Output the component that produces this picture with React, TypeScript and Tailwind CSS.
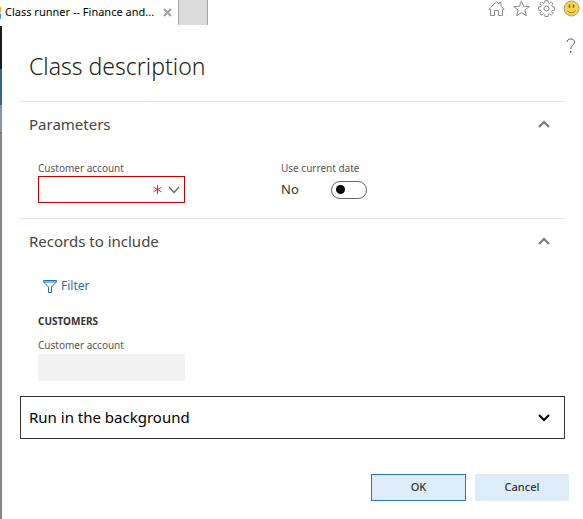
import { useState, type ReactNode } from "react";

function Chevron({ up = false, className = "" }: { up?: boolean; className?: string }) {
  return (
    <svg viewBox="0 0 12 8" className={`h-2 w-3 shrink-0 ${className}`} fill="none" stroke="currentColor" strokeWidth="2" aria-hidden="true">
      <path d={up ? "M1 7 6 2l5 5" : "M1 1l5 5 5-5"} />
    </svg>
  );
}

function BrowserBar() {
  return (
    <header className="flex h-[25px] justify-between">
      <div className="flex">
        <div className="flex items-center">
          <svg viewBox="0 0 1 12" className="mr-1 h-3 w-px" preserveAspectRatio="none" aria-hidden="true">
            <rect width="1" height="5" fill="#f5a623" />
            <rect y="5" width="1" height="2" fill="#cfe6f7" />
            <rect y="7" width="1" height="5" fill="#3b94d9" />
          </svg>
          <span className="w-[154px] whitespace-nowrap text-[11px] text-black">Class runner -- Finance and...</span>
          <button type="button" aria-label="Close tab" className="ml-1 mr-[6px] text-[#a0a0a0]">
            <svg viewBox="0 0 9 9" className="size-[9px]" stroke="currentColor" strokeWidth="2">
              <path d="M1 1l7 7M8 1 1 8" />
            </svg>
          </button>
        </div>
        <button type="button" aria-label="New tab" className="w-[30px] border-x border-[#a5a5a5] bg-[#dbdbdb]" />
      </div>
      <div className="flex items-start gap-2 pr-[3px] text-[#8c8c8c]">
        <button type="button" aria-label="Home">
          <svg viewBox="0 0 17 17" className="size-[17px]" fill="none" stroke="currentColor">
            <path d="M2.5 9.5H.8L8.5 1.5l2.5 2.6V2.5h2v3.7l3.2 3.3h-1.7v6h-4v-5h-4v5h-4v-6z" strokeLinejoin="round" />
          </svg>
        </button>
        <button type="button" aria-label="Favorites">
          <svg viewBox="0 0 17 17" className="size-[17px]" fill="none" stroke="currentColor">
            <path d="M8.5.8l2.1 5.5 5.7.2-4.5 3.7 1.6 5.6-4.9-3.2-4.9 3.2 1.6-5.6L.7 6.5l5.7-.2z" strokeLinejoin="round" />
          </svg>
        </button>
        <button type="button" aria-label="Tools">
          <svg viewBox="0 0 17 17" className="size-[17px]" fill="none" stroke="currentColor">
            <path d="M7 .7h3l.3 2.1 1.3.6 1.8-1.3 1.6 1.6-1.3 1.8.6 1.3 2.1.3v3l-2.1.3-.6 1.3 1.3 1.8-1.6 1.6-1.8-1.3-1.3.6-.3 2.1H7l-.3-2.1-1.3-.6-1.8 1.3L2 13.5l1.3-1.8-.6-1.3L.6 10V7l2.1-.3.6-1.3L2 3.6 3.6 2l1.8 1.3 1.3-.6z" strokeLinejoin="round" />
            <circle cx="8.5" cy="8.5" r="2.5" />
          </svg>
        </button>
        <button type="button" aria-label="Send a smile">
          <svg viewBox="0 0 17 17" className="size-[17px]" fill="none">
            <circle cx="8.5" cy="8.5" r="7.5" fill="#fbd34c" stroke="#a39a80" />
            <path d="M6.5 4.5v3.3M10.5 4.5v3.3" stroke="#7a6322" strokeWidth="1.5" />
            <path d="M4.5 10.5c2 3 6 3 8 0" stroke="#8a6d20" />
          </svg>
        </button>
      </div>
    </header>
  );
}

function Section({ title, children }: { title: string; children: ReactNode }) {
  const [open, setOpen] = useState(true);
  return (
    <section className="border-t border-[#e6e6e6]">
      <h2>
        <button
          type="button"
          aria-expanded={open}
          onClick={() => setOpen(!open)}
          className="flex h-11 w-full items-center justify-between pl-[9px] pr-[15px] text-[15px] text-[#444]"
        >
          {title}
          <Chevron up={open} className="text-[#777]" />
        </button>
      </h2>
      {open && children}
    </section>
  );
}

export default function App() {
  const [current, setCurrent] = useState(false);
  return (
    <div className="flex min-h-screen flex-col bg-white font-['Noto_Sans','Open_Sans',sans-serif]">
      <BrowserBar />
      <div className="flex grow pt-px">
        <div className="flex w-0.5 shrink-0 flex-col bg-[#858585]" aria-hidden="true">
          <div className="h-[43px] bg-[#1c1c1c]" />
          <div className="h-9 bg-[#37648b]" />
          <div className="h-7 border-b border-[#707070] bg-[#8496a6]" />
        </div>
        <main className="min-w-0 grow pl-[18px] pr-[14px]">
          <div className="flex h-[75px] justify-between">
            <h1 className="pl-[9px] pt-[22px] text-[23px] leading-9 font-light text-[#222]">Class description</h1>
            <button type="button" aria-label="Help" className="-mr-2 h-[38px] w-3 text-[#555]">
              <svg viewBox="0 0 10 15" className="mx-auto h-[15px] w-[10px]" fill="none" stroke="currentColor">
                <path d="M1 4C1 .2 8.5-.3 8.5 4 8.5 7 4.7 7 4.7 11" />
                <path d="M4.7 13v1.5" strokeWidth="1.4" />
              </svg>
            </button>
          </div>

          <div className="mr-1">
            <Section title="Parameters">
              <div className="flex h-[72px] gap-24 pl-[18px] pt-[14px]">
                <div className="w-[147px]">
                  <label htmlFor="account" className="block text-[10px] leading-4 text-[#555]">Customer account</label>
                  <div className="flex h-[27px] items-center border border-[#c80000] pr-1">
                    <input id="account" required className="h-full min-w-0 grow px-2 text-xs outline-none" />
                    <svg viewBox="0 0 9 9" className="mr-[6px] size-[9px] shrink-0 text-[#dc2a2a]" stroke="currentColor" aria-hidden="true">
                      <path d="M4.5 0v9M.5 2.2l8 4.6M8.5 2.2l-8 4.6" />
                    </svg>
                    <button type="button" aria-label="Open customer list" className="text-[#666]">
                      <svg viewBox="0 0 12 8" className="h-2 w-3" fill="none" stroke="currentColor" strokeWidth="1.3">
                        <path d="M1 1l5 5.5L11 1" />
                      </svg>
                    </button>
                  </div>
                </div>
                <div>
                  <label htmlFor="current" className="block text-[10px] leading-4 text-[#555]">Use current date</label>
                  <div className="flex h-[27px] items-center">
                    <span className="w-[50px] text-[13px] text-[#333]">{current ? "Yes" : "No"}</span>
                    <span className="relative flex">
                      <input
                        id="current"
                        type="checkbox"
                        role="switch"
                        checked={current}
                        onChange={() => setCurrent(!current)}
                        className="peer h-[18px] w-9 appearance-none rounded-full border border-[#666] bg-white"
                      />
                      <span className="pointer-events-none absolute left-[5px] top-1 size-[9px] rounded-full bg-black peer-checked:left-[21px]" />
                    </span>
                  </div>
                </div>
              </div>
            </Section>

            <Section title="Records to include">
              <div className="pb-[15px] pl-[18px] pt-[13px]">
                <button type="button" className="ml-[5px] flex h-5 items-center gap-1 text-xs text-[#1f6fb5]">
                  <svg viewBox="0 0 14 13" className="h-[13px] w-[14px]" fill="none" stroke="currentColor">
                    <path d="M.5.5h13v1.3L8.5 7v5.5h-3V7L.5 1.8zM.5 2h13" />
                  </svg>
                  Filter
                </button>
                <h3 className="mt-[17px] text-[10px] leading-4 font-bold text-[#333]">CUSTOMERS</h3>
                <label htmlFor="customer" className="mt-2 block text-[10px] leading-4 text-[#555]">Customer account</label>
                <input id="customer" readOnly className="mt-px block h-[27px] w-[147px] bg-[#f2f2f2] px-2 text-xs outline-none" />
              </div>
            </Section>

            <button
              type="button"
              className="flex h-[43px] w-full items-center justify-between border border-[#333] pl-2 pr-[14px] text-[15px] text-black"
            >
              Run in the background
              <Chevron />
            </button>
          </div>

          <div className="flex justify-end gap-[9px] pb-4 pt-[35px] text-[11px] font-medium text-[#333]">
            <button type="button" className="h-[27px] w-[95px] border border-[#2878b8] bg-[#deecf9]">OK</button>
            <button type="button" className="h-[27px] w-[94px] bg-[#deecf9]">Cancel</button>
          </div>
        </main>
      </div>
    </div>
  );
}
